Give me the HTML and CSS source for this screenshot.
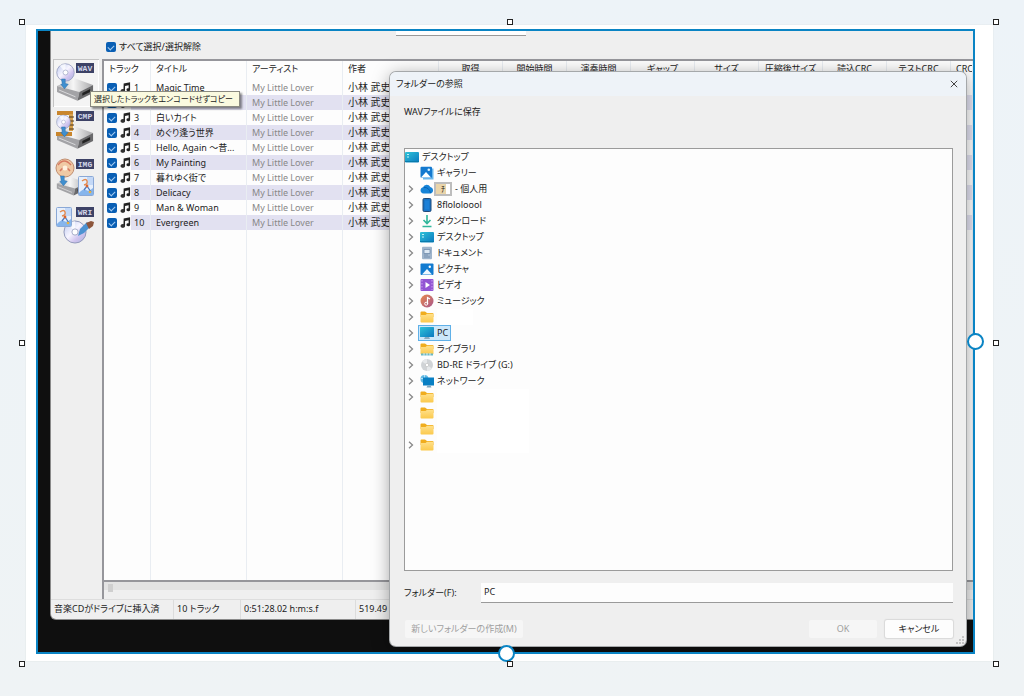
FILE: index.html
```html
<!DOCTYPE html>
<html lang="ja">
<head>
<meta charset="utf-8">
<title>フォルダーの参照</title>
<link rel="stylesheet" href="styles.css">
</head>
<body>
<svg class="defs" aria-hidden="true">
  <defs>
    <linearGradient id="g-desk" x1="0" y1="0" x2="1" y2="1"><stop offset="0" stop-color="#2fc3d8"/><stop offset="1" stop-color="#0a78c0"/></linearGradient>
    <linearGradient id="g-folder" x1="0" y1="0" x2="0" y2="1"><stop offset="0" stop-color="#ffe08a"/><stop offset="1" stop-color="#fbc94c"/></linearGradient>
    <linearGradient id="g-disc" x1="0" y1="0" x2="1" y2="1"><stop offset="0" stop-color="#b9c6ee"/><stop offset=".45" stop-color="#f7f5ff"/><stop offset=".7" stop-color="#cfc3ee"/><stop offset="1" stop-color="#a9b4dc"/></linearGradient>
    <linearGradient id="g-music" x1="0" y1="0" x2="1" y2="1"><stop offset="0" stop-color="#e88a4c"/><stop offset="1" stop-color="#a8558c"/></linearGradient>
    <linearGradient id="g-top" x1="0" y1="0" x2="1" y2="0"><stop offset="0" stop-color="#b5b5b7"/><stop offset=".45" stop-color="#f6f6f6"/><stop offset="1" stop-color="#a8a8aa"/></linearGradient>
    <symbol id="note" viewBox="0 0 12 12"><path d="M4 1.500 11 .2v8.200a2 1.700 0 1 1-1.600-1.600V3.600L5.500 4.400v5.400a2.200 1.800 0 1 1-1.700-1.800z" fill="#222"/><ellipse cx="2.800" cy="9.800" rx="2.300" ry="1.800" fill="#333"/></symbol>
    <symbol id="desk" viewBox="0 0 14 14"><rect x="0" y="2" width="14" height="10.500" rx="1" fill="url(#g-desk)"/><path d="M2 4.500h2M2 7h2" stroke="#bdf3f6"/><path d="M0 11.500h14" stroke="#087bab"/></symbol>
    <symbol id="gallery" viewBox="0 0 14 14"><path d="M3 2.500h10.500v11H3z" fill="#69b7ec"/><rect x=".5" y=".8" width="11.500" height="11" rx="1" fill="#1479cf"/><path d="M1 11.500 6 6l5 5.500z" fill="#fff"/><circle cx="8.800" cy="3.800" r="1.300" fill="#d8f1ff"/></symbol>
    <symbol id="cloud" viewBox="0 0 14 14"><path d="M3.500 11.500A3.200 3.200 0 0 1 3 5.200 4 4 0 0 1 10.300 5 3.400 3.400 0 0 1 11 11.500z" fill="#1684d8"/><path d="M4 5.500q5-.5 6.500 5.500" fill="none" stroke="#0762b3"/></symbol>
    <symbol id="phone" viewBox="0 0 14 14"><rect x="3" y=".5" width="8" height="13" rx="1.200" fill="#1975c7" stroke="#214a78"/><path d="M5 2.500h4v9H5z" fill="#1d80d7"/></symbol>
    <symbol id="down" viewBox="0 0 14 14"><path d="M7 1v8M3.500 6 7 9.500 10.500 6M2.500 12.500h9" fill="none" stroke="#2fb79b" stroke-width="1.600"/></symbol>
    <symbol id="doc" viewBox="0 0 14 14"><rect x="2" y=".8" width="10" height="12.500" rx="1" fill="#9fb5cc"/><path d="M4 3.500h6v4H4zM4 9h4M4 11h6" fill="#dce8f3" stroke="#6f8cab" stroke-width=".8"/></symbol>
    <symbol id="pic" viewBox="0 0 14 14"><rect x=".5" y="1.500" width="13" height="11.500" rx="1" fill="#127bd0"/><path d="M2 12.500 7 7l5 5.500z" fill="#eff9ff"/><circle cx="9.800" cy="4.800" r="1.200" fill="#fff"/></symbol>
    <symbol id="video" viewBox="0 0 14 14"><rect x=".5" y="1" width="13" height="12" rx="1" fill="#9355d3"/><path d="M2 2v10M12 2v10" stroke="#c9a0f0" stroke-dasharray="1.500 1.500"/><path d="m5.500 4 4.500 3-4.500 3z" fill="#fff"/></symbol>
    <symbol id="music" viewBox="0 0 14 14"><circle cx="7" cy="7" r="6.500" fill="url(#g-music)"/><path d="M7.500 10V3.500l2.500 1.500" fill="none" stroke="#fff" stroke-width="1.200"/><circle cx="6.200" cy="9.700" r="1.500" fill="none" stroke="#fff"/></symbol>
    <symbol id="folder" viewBox="0 0 14 14"><path d="M.5 2.500q0-1 1-1h3.500l2 1.500h5.500q1 0 1 1v3h-13z" fill="#f0ad1e"/><path d="M.5 5h5L7 3.800h6.500v7.700q0 1-1 1h-11q-1 0-1-1z" fill="url(#g-folder)"/></symbol>
    <symbol id="lib" viewBox="0 0 14 14"><use href="#folder"/><path d="M1 11.500h12v2H1z" fill="#6ab8c4"/><path d="M4 11v3M7 11v3M10 11v3" stroke="#d8eef0"/></symbol>
    <symbol id="pc" viewBox="0 0 14 14"><rect x="0" y="1" width="14" height="10" rx=".6" fill="url(#g-desk)"/><path d="M5 11h4l1 2H4z" fill="#8aa9bd"/></symbol>
    <symbol id="drive" viewBox="0 0 14 14"><circle cx="7" cy="7" r="6" fill="#d0d3d6"/><path d="M7 7 2 3.500A6 6 0 0 1 7 1zM7 7l5 3.500A6 6 0 0 1 7 13z" fill="#e6e8ea"/><circle cx="7" cy="7" r="1.700" fill="#fff" stroke="#bbb" stroke-width=".6"/></symbol>
    <symbol id="net" viewBox="0 0 14 14"><circle cx="4.500" cy="5" r="4" fill="#62b9e3"/><path d="M1 4.500h7M4.500 1v8" stroke="#d7f2ff" stroke-width=".7"/><rect x="3" y="3.500" width="11" height="8" fill="#087fc3"/><path d="M7.500 11.500h3l1 2h-5z" fill="#7aa4bd"/></symbol>
    <symbol id="chev" viewBox="0 0 8 8"><path d="m2 .8 3.500 3.200L2 7.200" fill="none" stroke="#888" stroke-width="1.300"/></symbol>
    <symbol id="unit" viewBox="0 0 40 24"><path d="M1 9 19 1l19 7-14 7z" fill="url(#g-top)"/><path d="M1 9v6l21 9 2-9z" fill="#a3a3a6"/><path d="M24 15 38 8v8l-16 8z" fill="#6a6a6c"/><path d="m27 16 8-4v3l-8 4z" fill="#222"/><path d="m3 13 17 7" stroke="#d9d9db"/></symbol>
    <symbol id="disc" viewBox="0 0 20 20"><circle cx="10" cy="10" r="9.200" fill="url(#g-disc)" stroke="#8f97b9" stroke-width=".8"/><path d="M10 10 4 3A9 9 0 0 1 10 1z" fill="#fff" opacity=".7"/><circle cx="10" cy="10" r="2.600" fill="#fff" stroke="#99a0bf" stroke-width=".7"/></symbol>
    <symbol id="arrow" viewBox="0 0 12 14"><path d="M2 1h5v6l4 1-5 6-5-6h2z" fill="#3f8fcf" stroke="#2468a4" stroke-width=".6"/></symbol>
    <symbol id="card" viewBox="0 0 16 20"><rect x=".5" y=".5" width="15" height="19" rx="1" fill="#e6effc" stroke="#8aa8d6"/><path d="M9 1h6v8H9z" fill="#c3d8f7"/><path d="M1 17q4-5 7-3t7-2v7H1z" fill="#86b5ec"/><path d="M4 5q4-3 5 0t-3 4" fill="none" stroke="#e58a4e" stroke-width="1.400"/><path d="m6 14 3-4 4 6" fill="none" stroke="#4f79bd" stroke-width="1.300"/><circle cx="9" cy="10" r="1.400" fill="#d9632e"/><circle cx="12" cy="16" r="1.300" fill="#e9b23e"/></symbol>
  </defs>
</svg>

<main class="sheet">
  <div class="frame">
    <section class="app">
      <header class="topbar">
        <label class="all"><input class="tick" type="checkbox" checked>すべて選択/選択解除</label>
        <span class="topfield"></span>
      </header>
      <div class="work">
        <nav class="tools">
          <button class="tool tool-on" aria-label="WAV">
            <svg viewBox="0 0 46 48"><use href="#unit" x="3" y="18" width="39" height="24"/><use href="#disc" x="3" y="4" width="19" height="19"/><use href="#arrow" x="7" y="19" width="9" height="11"/><rect class="plate" x="23" y="4" width="18" height="10"/><text class="tag" x="32" y="12">WAV</text></svg>
          </button>
          <button class="tool" aria-label="CMP">
            <svg viewBox="0 0 46 48"><use href="#unit" x="3" y="18" width="39" height="24"/><path d="M4 6h16M3 27h16" stroke="#c9862d" stroke-width="4"/><path d="M18 7v17" stroke="#d8a14c" stroke-width="4"/><path d="M16 10h5M16 14h5M16 18h5M16 22h5" stroke="#4b3720"/><use href="#disc" x="3" y="7" width="15" height="16"/><use href="#arrow" x="7" y="19" width="9" height="11"/><rect class="plate" x="23" y="4" width="18" height="10"/><text class="tag" x="32" y="12">CMP</text></svg>
          </button>
          <button class="tool" aria-label="IMG">
            <svg viewBox="0 0 46 48"><use href="#unit" x="3" y="21" width="32" height="20"/><circle cx="12" cy="13" r="9" fill="#f0c9a4" stroke="#c18e70"/><path d="M5 10q6-8 13 0M7 16q5-7 10 0" fill="none" stroke="#d77962" stroke-width="1.500"/><circle cx="12" cy="13" r="2.500" fill="#fff1df"/><use href="#arrow" x="6" y="20" width="9" height="11"/><use href="#card" x="25" y="21" width="16" height="20"/><rect class="plate" x="23" y="4" width="18" height="10"/><text class="tag" x="32" y="12">IMG</text></svg>
          </button>
          <button class="tool" aria-label="WRI">
            <svg viewBox="0 0 46 48"><use href="#disc" x="9" y="17" width="26" height="24"/><use href="#card" x="3" y="4" width="16" height="20"/><path d="m25 33 2-7 7-7 4 4-7 7z" fill="#4c93d2"/><path d="m33 20 5-2 3 1-1 4-4 3z" fill="#8d563c"/><rect class="plate" x="23" y="4" width="18" height="10"/><text class="tag" x="32" y="12">WRI</text></svg>
          </button>
        </nav>
        <div class="list">
          <table class="tracks">
            <colgroup><col class="c-no"><col class="c-text"><col class="c-text"><col class="c-text"><col class="c-num"><col class="c-num"><col class="c-num"><col class="c-num"><col class="c-num"><col class="c-num"><col class="c-num"><col class="c-num"><col></colgroup>
            <thead><tr><th>トラック</th><th>タイトル</th><th>アーティスト</th><th>作者</th><th class="mid">取得</th><th class="mid">開始時間</th><th class="mid">演奏時間</th><th class="mid">ギャップ</th><th class="mid">サイズ</th><th class="mid">圧縮後サイズ</th><th class="mid">読込CRC</th><th class="mid">テストCRC</th><th>CRC</th></tr></thead>
            <tbody id="rows"></tbody>
          </table>
          <div class="scroll"><span class="thumb"></span></div>
        </div>
      </div>
      <footer class="status"><span class="s1">音楽CDがドライブに挿入済</span><span class="s2">10 トラック</span><span class="s3">0:51:28.02 h:m:s.f</span><span class="s4">519.49 MB</span></footer>
      <div class="tip" role="tooltip">選択したトラックをエンコードせずコピー</div>
    </section>

    <section class="dialog" role="dialog" aria-labelledby="dlg-title">
      <header class="dlg-bar"><span id="dlg-title">フォルダーの参照</span>
        <button class="close" aria-label="閉じる"><svg viewBox="0 0 8 8"><path d="m.8.8 6.400 6.400M7.200.8.8 7.200" stroke="#444" fill="none"/></svg></button></header>
      <div class="dlg-body">
        <p class="lead">WAVファイルに保存</p>
        <ul class="tree" id="tree"></ul>
        <div class="field"><label for="folder-name">フォルダー(F):</label><input id="folder-name" type="text" value="PC"></div>
        <div class="actions"><button class="btn btn-new" disabled>新しいフォルダーの作成(M)</button><button class="btn" disabled>OK</button><button class="btn btn-live">キャンセル</button></div>
      </div>
      <svg class="grip" viewBox="0 0 8 8"><path d="M6 0h2v2H6zM3 3h2v2H3zM6 3h2v2H6zM0 6h2v2H0zM3 6h2v2H3zM6 6h2v2H6z" fill="#c4c4c4"/></svg>
    </section>
  </div>
  <i class="knob knob-r"></i><i class="knob knob-b"></i>
  <i class="h t l"></i><i class="h t c"></i><i class="h t r"></i><i class="h m l"></i><i class="h m r"></i><i class="h b l"></i><i class="h b c"></i><i class="h b r"></i>
</main>
<script src="app.js"></script>
</body>
</html>
```
FILE: styles.css
```css
* { box-sizing: border-box; }
body {
  margin: 0;
  min-height: 100vh;
  display: flex;
  padding: 25px 31px 35px 26px;
  background: linear-gradient(#edf3f8, #eff3f5);
  color: #222;
  font: 9px/14px "Noto Sans", "Noto Sans CJK JP", sans-serif;
  font-feature-settings: "palt";
}
button, input { font: inherit; color: inherit; font-feature-settings: inherit; }
.defs { position: absolute; width: 0; height: 0; }
.sheet {
  position: relative;
  flex: 1;
  min-width: 0;
  display: flex;
  padding: 4px 18px 7px 10px;
  background: #fff;
  box-shadow: 0 0 1px #ccd2d6;
}
.frame {
  position: relative;
  flex: 1;
  min-width: 0;
  display: flex;
  padding: 0 0 33px 13px;
  border: 2px solid #0a84c4;
  background: #0f0f0f;
  overflow: hidden;
}

/* Ripper window */
.app {
  position: relative;
  flex: 1;
  min-width: 0;
  display: flex;
  flex-direction: column;
  background: #efefef;
  border-radius: 0 0 0 5px;
  box-shadow: 0 0 0 1px #8a8a8a;
}
.topbar { height: 28px; display: flex; padding-left: 55px; }
.all { width: 290px; display: flex; align-items: center; gap: 3px; padding-top: 4px; }
.topfield { width: 130px; height: 5px; background: #fff; border-bottom: 1px solid #999; }
.tick {
  appearance: none;
  flex: none;
  width: 10px;
  height: 10px;
  margin: 0;
  border-radius: 2px;
  background: #0a5fb4;
  display: grid;
  place-items: center;
}
.tick:checked::before {
  content: "";
  width: 5px;
  height: 3px;
  border: solid #a9cdf0;
  border-width: 0 0 1px 1px;
  rotate: -45deg;
}
.work { flex: 1; min-height: 0; display: flex; }
.tools { width: 51px; padding-left: 2px; display: flex; flex-direction: column; }
.tool { width: 46px; height: 48px; padding: 0; border: 0; background: none; }
.tool svg { display: block; width: 46px; height: 48px; }
.tool-on { background: #f4f4f4; box-shadow: inset 1px 1px #c4c4c4, inset -1px -1px #fff; }
.plate { fill: #3d4266; }
.tag { fill: #d3d6ea; font: bold 8px "Liberation Mono", monospace; text-anchor: middle; }
.list {
  flex: 1;
  min-width: 0;
  display: flex;
  flex-direction: column;
  border-top: 2px solid #96969b;
  border-left: 2px solid #96969b;
  overflow: hidden;
}
.tracks { flex: 1; width: 100%; height: 519px; table-layout: fixed; border-collapse: separate; border-spacing: 0; background: #fdfdfd; }
.c-no { width: 47px; }
.c-text { width: 96px; }
.c-num { width: 64px; }
th, td { padding: 0 0 0 5px; text-align: left; font-weight: 400; white-space: nowrap; overflow: hidden; border-right: 1px solid #e9edf2; }
th { height: 19px; padding-bottom: 3px; line-height: 14px; }
td { height: 15px; line-height: 15px; }
th.mid { padding: 0 0 3px; text-align: center; }
tr.alt td { background: #e2e1f1; background-clip: padding-box; }
tr.alt td.no { background: linear-gradient(90deg, transparent 27px, #e2e1f1 27px); }
.no { padding-left: 3px; }
.no label { display: flex; align-items: center; height: 15px; gap: 3px; }
.no svg { width: 11px; height: 11px; }
.artist { color: #888; }
.author { font-size: 10px; }
.rest td { height: auto; }
.scroll { height: 19px; padding: 2px 4px; border-top: 2px solid #96969b; background: linear-gradient(#e3e3e3 8px, #efefef 8px); }
.thumb { display: block; width: 5px; height: 8px; background: #cfcfcf; }
.status { height: 20px; display: flex; border-top: 1px solid #ddd; line-height: 18px; white-space: nowrap; overflow: hidden; border-radius: 0 0 0 5px; }
.status span { padding-left: 3px; border-right: 1px solid #dcdcdc; }
.s1 { width: 123px; }
.s2 { width: 67px; }
.s3 { width: 115px; }
.tip {
  position: absolute;
  left: 39px;
  top: 60px;
  padding: 0 6px 0 3px;
  border: 1px solid #8a8a80;
  background: #fafadf;
  box-shadow: 2px 2px 2px rgb(0 0 0 / 45%);
  font-size: 8px;
  white-space: nowrap;
}

/* Folder picker */
.dialog {
  position: absolute;
  left: 352px;
  top: 41px;
  right: 7px;
  bottom: 6px;
  display: flex;
  flex-direction: column;
  border-radius: 6px;
  background: #efefef;
  box-shadow: 0 0 0 1px #a5a8aa, 0 3px 18px rgb(0 0 0 / 38%);
}
.dlg-bar { height: 24px; display: flex; align-items: center; justify-content: space-between; padding: 0 8px 0 6px; background: #eef3f8; border-radius: 6px 6px 0 0; }
.close { width: 8px; height: 8px; padding: 0; border: 0; background: none; }
.close svg { display: block; }
.dlg-body { flex: 1; min-height: 0; display: flex; flex-direction: column; padding: 9px 13px 8px 14px; }
.lead { margin: 0 0 29px; }
.tree { flex: 1; min-height: 0; margin: 0; padding: 0; list-style: none; overflow: hidden; border: 1px solid #9b9b9b; background: #fdfdfd; }
.node { display: flex; align-items: center; height: 16px; }
.node svg { flex: none; width: 14px; height: 14px; }
.exp { width: 13px; height: 14px; padding: 0 0 0 2px; border: 0; background: none; }
.node .exp svg { display: block; width: 8px; height: 8px; }
.item { display: flex; align-items: center; gap: 3px; height: 16px; padding: 0 2px 0 1px; border: 1px solid transparent; white-space: nowrap; }
.root .item { padding: 0; border: 0; }
.item.on { border-color: #5fb0e8; background: #cce7fa; }
.blank { width: 92px; height: 16px; background: #fff; }
.blank.short { width: 36px; }
.mask { width: 18px; height: 14px; margin-left: -3px; border: 2px solid #bdbdbd; background: linear-gradient(90deg, #ead5aa 10px, #fff 10px); font-size: 8px; line-height: 10px; text-align: center; }
.field { display: flex; align-items: center; margin-top: 12px; }
.field label { width: 77px; }
.field input { flex: 1; min-width: 0; height: 20px; padding: 0 3px 3px; border: 0; border-bottom: 1px solid #9a9a9a; background: #fdfdfd; }
.actions { display: flex; gap: 8px; margin-top: 17px; }
.btn { width: 68px; height: 18px; padding: 0; border: 0; border-radius: 2px; background: #f6f6f6; color: #a0a0a0; line-height: 16px; white-space: nowrap; }
.btn-new { width: 118px; margin: 0 auto 0 1px; }
.btn-live { background: #fdfdfd; color: #222; box-shadow: 0 0 1px 1px #d9d9d9; }
.grip { position: absolute; right: 2px; bottom: 2px; width: 8px; height: 8px; }

/* Selection handles */
.h { position: absolute; width: 6px; height: 6px; border: 1px solid #222; background: #fff; }
.t { top: -6px; }
.m { top: 50%; margin-top: -3px; }
.b { bottom: -6px; }
.l { left: -7px; }
.c { left: 50%; margin-left: -3px; }
.r { right: -6px; }
.knob { position: absolute; width: 17px; height: 17px; border: 2px solid #0a84c4; border-radius: 50%; background: #fff; }
.knob-r { right: 9px; top: 50%; margin-top: -10px; }
.knob-b { left: 50%; bottom: -1px; margin-left: -12px; }
```
FILE: app.js
```js
const titles = ["Magic Time", "", "白いカイト", "めぐり逢う世界", "Hello, Again 〜昔...", "My Painting", "暮れゆく街で", "Delicacy", "Man & Woman", "Evergreen"];
const icon = (id) => `<svg viewBox="0 0 14 14" aria-hidden="true"><use href="#${id}"/></svg>`;

document.getElementById("rows").innerHTML = titles.map((title, i) => `
  <tr class="${i % 2 ? "alt" : ""}">
    <td class="no"><label><input class="tick" type="checkbox" checked>${icon("note")}${i + 1}</label></td>
    <td>${title.replace("&", "&amp;")}</td><td class="artist">My Little Lover</td><td class="author">小林 武史</td>
    ${"<td></td>".repeat(9)}
  </tr>`).join("") + `<tr class="rest">${"<td></td>".repeat(13)}</tr>`;

const nodes = [
  ["gallery", "ギャラリー", false],
  ["cloud", '<span class="mask">ﾁ</span>- 個人用', true],
  ["phone", "8flololoool", true],
  ["down", "ダウンロード", true],
  ["desk", "デスクトップ", true],
  ["doc", "ドキュメント", true],
  ["pic", "ピクチャ", true],
  ["video", "ビデオ", true],
  ["music", "ミュージック", true],
  ["folder", '<span class="blank short"></span>', true],
  ["pc", "PC", true],
  ["lib", "ライブラリ", true],
  ["drive", "BD-RE ドライブ (G:)", true],
  ["net", "ネットワーク", true],
  ["folder", '<span class="blank"></span>', true],
  ["folder", '<span class="blank"></span>', false],
  ["folder", '<span class="blank"></span>', false],
  ["folder", '<span class="blank"></span>', true],
];
const row = ([id, label, open]) => `<li class="node">
  <button class="exp" aria-label="展開" ${open ? "" : "disabled"}>${open ? '<svg viewBox="0 0 8 8"><use href="#chev"/></svg>' : ""}</button>
  <span class="item ${id === "pc" ? "on" : ""}">${icon(id)}${label}</span></li>`;
document.getElementById("tree").innerHTML =
  `<li class="node root"><span class="item">${icon("desk")}デスクトップ</span></li>` + nodes.map(row).join("");
```
